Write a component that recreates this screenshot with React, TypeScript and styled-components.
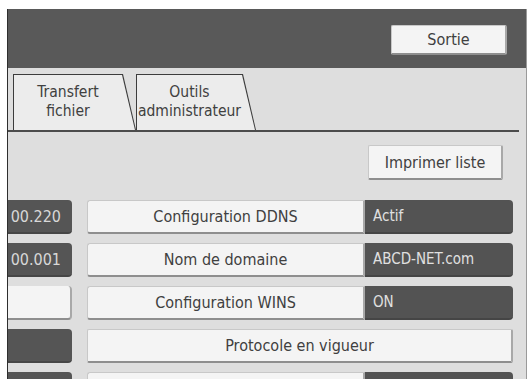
import React from 'react';
import styled, { createGlobalStyle } from 'styled-components';

const GlobalStyle = createGlobalStyle`
    html, body {
        margin: 0;
        padding: 0;
        background: #ffffff;
    }
    body {
        font-family: "DejaVu Sans Condensed", "Liberation Sans", sans-serif;
        font-stretch: condensed;
    }
`;

const Frame = styled.div`
    margin: 9px 0 0 7px;
    width: 518px;
    height: 370px;
    overflow: hidden;
    border-left: 1px solid #2e2e2e;
    border-right: 1px solid #9a9a9a;
    background: #dedede;
    display: flex;
    flex-direction: column;
`;

const Header = styled.div`
    height: 59px;
    flex: none;
    background: #595959;
    display: flex;
    justify-content: flex-end;
    align-items: flex-start;
    padding: 16px 19px 0 0;
    box-sizing: border-box;
`;

const Button = styled.div<{ $w?: number; $h?: number }>`
    width: ${(p) => (p.$w ? `${p.$w}px` : 'auto')};
    height: ${(p) => (p.$h ? `${p.$h}px` : '100%')};
    flex: none;
    box-sizing: border-box;
    background: #f4f4f4;
    border: 1px solid #c8c8c8;
    border-bottom: 2px solid #8e8e8e;
    border-right: 2px solid #a8a8a8;
    border-radius: 2px;
    display: flex;
    align-items: center;
    justify-content: center;
    color: #404040;
    font-size: 16px;
`;

const TabBar = styled.div`
    height: 64px;
    flex: none;
    box-sizing: border-box;
    margin-right: 7px;
    padding: 8px 0 0 5px;
    border-bottom: 2px solid #4c4c4c;
    display: flex;
    align-items: flex-end;
`;

const Tab = styled.div<{ $w: number }>`
    position: relative;
    width: ${(p) => p.$w}px;
    height: 56px;
    flex: none;
    display: flex;
    align-items: center;
    padding-right: 13px;
    box-sizing: border-box;
    justify-content: center;
    text-align: center;
    color: #404040;
    font-size: 15.5px;
    line-height: 19px;

    &::before,
    &::after {
        content: '';
        position: absolute;
        z-index: 0;
    }
    &::before {
        inset: 0;
        background: #3c3c3c;
        clip-path: polygon(0 0, calc(100% - 13px) 0, 100% 100%, 0 100%);
    }
    &::after {
        inset: 1px 1px 0 1px;
        background: #ececec;
        clip-path: polygon(0 0, calc(100% - 13px) 0, 100% 100%, 0 100%);
    }
    span {
        position: relative;
        z-index: 1;
    }
`;

const Body = styled.div`
    display: flex;
    flex-direction: column;
    padding-top: 13px;
`;

const Toolbar = styled.div`
    display: flex;
    justify-content: flex-end;
    padding-right: 23px;
    margin-bottom: 20px;
`;

const Rows = styled.div`
    display: flex;
    flex-direction: column;
    gap: 9px;
`;

const Row = styled.div`
    display: flex;
    height: 34px;
    flex: none;
`;

const Left = styled.div<{ $light?: boolean }>`
    box-sizing: border-box;
    flex: none;
    width: 64px;
    margin-right: 15px;
    background: ${(p) => (p.$light ? '#f4f4f4' : '#555555')};
    border-radius: 0 4px 4px 0;
    border-bottom: 2px solid ${(p) => (p.$light ? '#8e8e8e' : '#464646')};
    border-right: ${(p) => (p.$light ? '2px solid #a8a8a8' : 'none')};
    display: flex;
    align-items: center;
    justify-content: flex-end;
    padding-right: 11px;
    color: #d8d8d8;
    font-size: 16px;
    white-space: nowrap;
`;

const Label = styled(Button)`
    border-radius: 3px 0 0 3px;
`;

const Value = styled.div`
    box-sizing: border-box;
    flex: none;
    width: 148px;
    background: #535353;
    border-radius: 0 4px 4px 0;
    border-bottom: 2px solid #454545;
    display: flex;
    align-items: center;
    padding-left: 8px;
    color: #e0e0e0;
    font-size: 15px;
    white-space: nowrap;
`;

const rows = [
    { left: '00.220', label: 'Configuration DDNS', value: 'Actif' },
    { left: '00.001', label: 'Nom de domaine', value: 'ABCD-NET.com' },
    { left: '', light: true, label: 'Configuration WINS', value: 'ON' },
];

export default function App() {
    return (
        <>
            <GlobalStyle />
            <Frame>
                <Header>
                    <Button $w={116} $h={30}>Sortie</Button>
                </Header>
                <TabBar>
                    <Tab $w={123}><span>Transfert<br />fichier</span></Tab>
                    <Tab $w={120}><span>Outils<br />administrateur</span></Tab>
                </TabBar>
                <Body>
                    <Toolbar>
                        <Button $w={135} $h={35}>Imprimer liste</Button>
                    </Toolbar>
                    <Rows>
                        {rows.map((r) => (
                            <Row key={r.label}>
                                <Left $light={r.light}>{r.left}</Left>
                                <Label $w={278}>{r.label}</Label>
                                <Value>{r.value}</Value>
                            </Row>
                        ))}
                        <Row>
                            <Left />
                            <Button $w={426}>Protocole en vigueur</Button>
                        </Row>
                        <Row>
                            <Left />
                            <Label $w={278} />
                            <Value />
                        </Row>
                    </Rows>
                </Body>
            </Frame>
        </>
    );
}
